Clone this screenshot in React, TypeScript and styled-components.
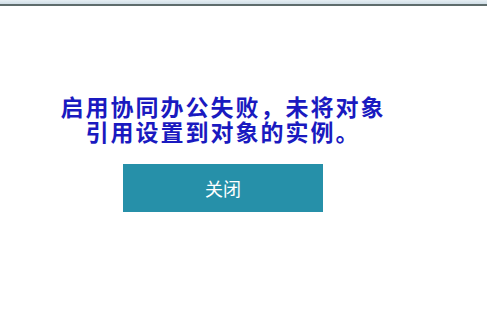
import styled, { createGlobalStyle } from 'styled-components';

const GlobalStyle = createGlobalStyle`
  html, body {
    margin: 0;
    padding: 0;
    background: #ffffff;
  }
  body {
    font-family: "Noto Sans CJK SC", "Microsoft YaHei", sans-serif;
  }
`;

const TopBar = styled.div`
  height: 4px;
  background: linear-gradient(to bottom, #e6eef3, #cfdde6);
  border-bottom: 2px solid #5e6c6c;
`;

const Panel = styled.div`
  width: 446px;
  display: flex;
  flex-direction: column;
  align-items: center;
  padding-top: 88px;
`;

const Message = styled.div`
  font-size: 23px;
  line-height: 25px;
  letter-spacing: 2px;
  font-weight: 700;
  color: #1a1ac0;
  text-align: center;
  margin-bottom: 20px;
`;

const CloseButton = styled.button`
  width: 200px;
  height: 48px;
  border: none;
  background: #2690a9;
  color: #ffffff;
  font-family: inherit;
  font-size: 18px;
  cursor: pointer;
`;

function App() {
  return (
    <>
      <GlobalStyle />
      <TopBar />
      <Panel>
        <Message>
          启用协同办公失败，未将对象
          <br />
          引用设置到对象的实例。
        </Message>
        <CloseButton>关闭</CloseButton>
      </Panel>
    </>
  );
}

export default App;
